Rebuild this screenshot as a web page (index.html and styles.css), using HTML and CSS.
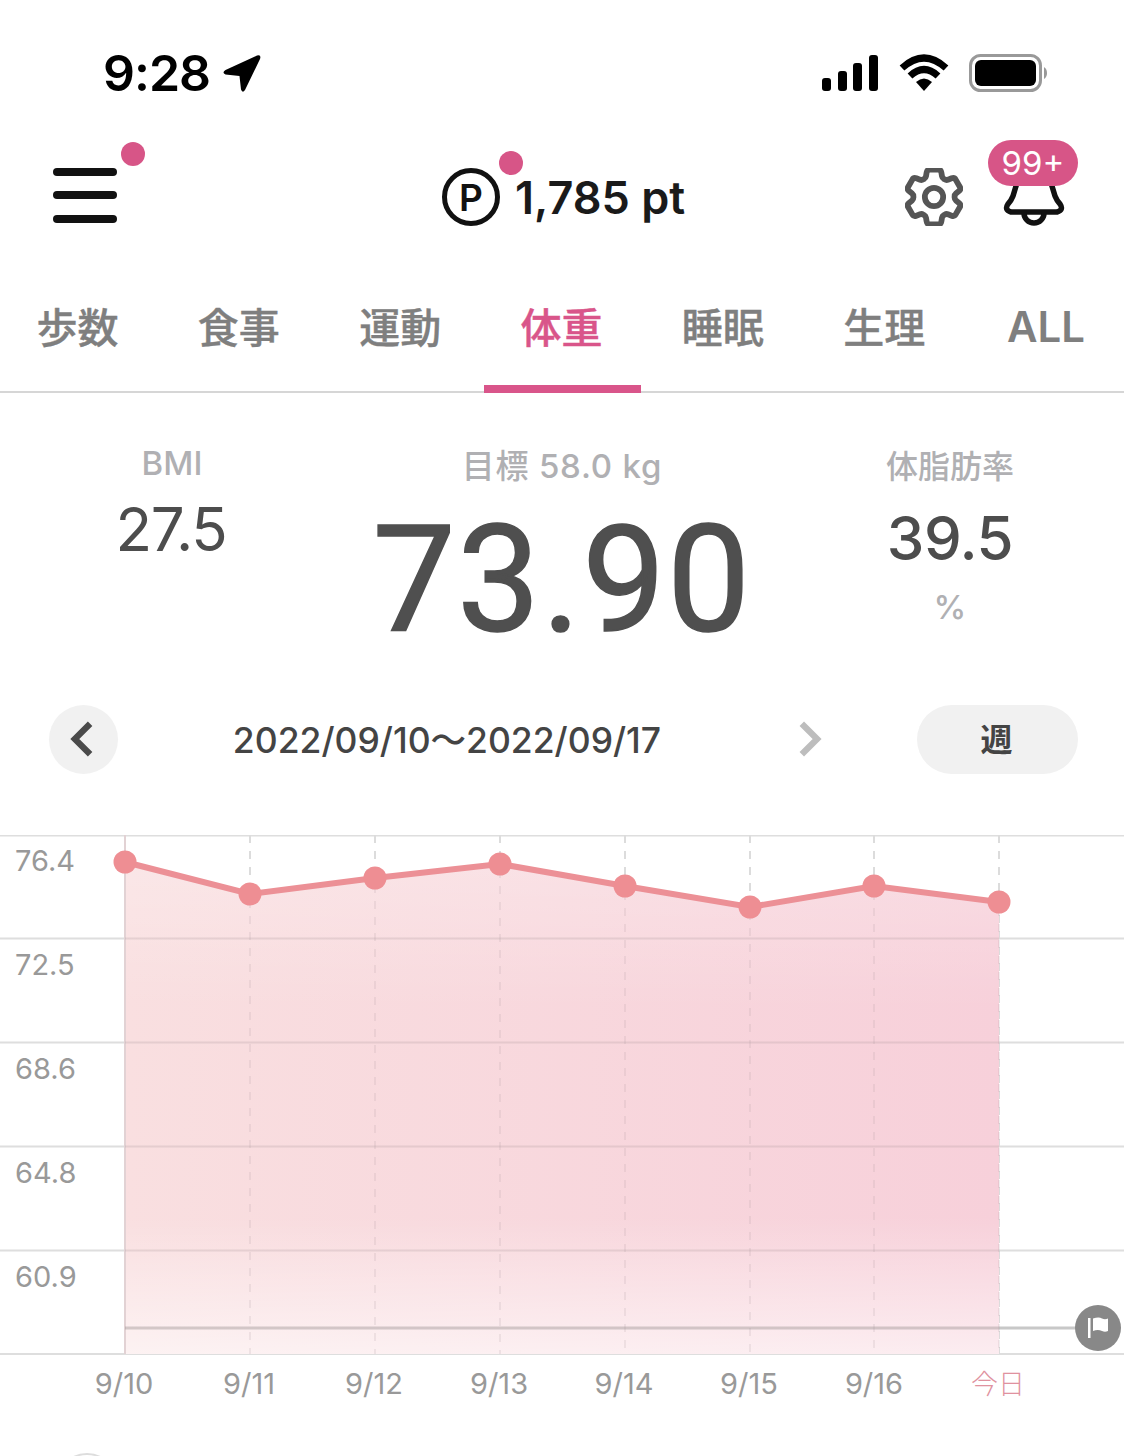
FILE: index.html
```html
<!DOCTYPE html>
<html lang="ja">
<head>
<meta charset="utf-8">
<title>体重</title>
<link rel="stylesheet" href="styles.css">
</head>
<body>
<div class="page">
  <div class="status">
    <span class="time">9:28</span>
    <svg class="loc" width="40" height="40" viewBox="0 0 40 40"><path class="black" d="M35 2.5 L3.5 17 Q-0.5 19.5 3.5 21.5 L17.5 23 L19 36.5 Q20.5 40.5 23 37 L38 6 Q39.5 1 35 2.5Z"/></svg>
    <div class="status-right">
      <svg width="58" height="38" viewBox="0 0 58 38"><rect class="black" x="1" y="24" width="9" height="13" rx="3"/><rect class="black" x="17" y="17" width="9" height="20" rx="3"/><rect class="black" x="32" y="9" width="9" height="28" rx="3"/><rect class="black" x="48" y="1" width="9" height="36" rx="3"/></svg>
      <svg width="50" height="38" viewBox="0 0 50 38"><path class="wifi" d="M3 14 Q25 -6 47 14"/><path class="wifi" d="M11 22 Q25 9 39 22"/><path class="black" d="M17 28 Q25 21 33 28 L25 37Z"/></svg>
      <svg width="78" height="38" viewBox="0 0 78 38"><rect class="bat-o" x="1.5" y="1.5" width="70" height="35" rx="10"/><rect class="black" x="6" y="6" width="61" height="26" rx="6"/><path class="bat-c" d="M75 13 Q78 15 78 19 Q78 23 75 25Z"/></svg>
    </div>
  </div>

  <header class="top">
    <div class="menu"><i></i><i></i><i></i><b class="dot menu-dot"></b></div>
    <div class="points"><span class="p-mark">P</span><span class="p-num">1,785 pt</span><b class="dot p-dot"></b></div>
    <svg class="gear" width="58" height="58" viewBox="2.5 2.5 19 19"><path d="M9.594 3.94c.09-.542.56-.94 1.11-.94h2.593c.55 0 1.02.398 1.11.94l.213 1.281c.063.374.313.686.645.87.074.04.147.083.22.127.324.196.72.257 1.075.124l1.217-.456a1.125 1.125 0 011.37.49l1.296 2.247a1.125 1.125 0 01-.26 1.431l-1.003.827c-.293.24-.438.613-.431.992a6.759 6.759 0 010 .255c-.007.378.138.75.43.99l1.005.828c.424.35.534.954.26 1.43l-1.298 2.247a1.125 1.125 0 01-1.369.491l-1.217-.456c-.355-.133-.75-.072-1.076.124a6.57 6.57 0 01-.22.128c-.331.183-.581.495-.644.869l-.213 1.28c-.09.543-.56.941-1.11.941h-2.594c-.55 0-1.02-.398-1.11-.94l-.213-1.281c-.062-.374-.312-.686-.644-.87a6.52 6.52 0 01-.22-.127c-.325-.196-.72-.257-1.076-.124l-1.217.456a1.125 1.125 0 01-1.369-.49l-1.297-2.247a1.125 1.125 0 01.26-1.431l1.004-.827c.292-.24.437-.613.43-.992a6.932 6.932 0 010-.255c.007-.378-.138-.75-.43-.99l-1.004-.828a1.125 1.125 0 01-.26-1.43l1.297-2.247a1.125 1.125 0 011.37-.491l1.216.456c.356.133.751.072 1.076-.124.072-.044.146-.087.22-.128.332-.183.582-.495.644-.869l.214-1.281z"/><circle cx="12" cy="12" r="3"/></svg>
    <div class="bell">
      <svg width="64" height="70" viewBox="0 0 64 70"><path d="M18 10 L11 33 Q9 38 6 41 Q2 47 9 49 H55 Q62 47 58 41 Q55 38 53 33 L46 10"/><path d="M22 50 a10 10 0 0 0 20 0"/></svg>
      <span class="badge">99+</span>
    </div>
  </header>

  <nav class="tabs">
    <a class="tab">歩数</a><a class="tab">食事</a><a class="tab">運動</a><a class="tab on">体重</a><a class="tab">睡眠</a><a class="tab">生理</a><a class="tab last">ALL</a>
  </nav>

  <section class="stats">
    <div class="stat bmi"><div class="label">BMI</div><div class="small-val">27.5</div></div>
    <div class="stat main"><div class="label">目標 58.0 kg</div><div class="big-val">73.90</div></div>
    <div class="stat fat"><div class="label">体脂肪率</div><div class="mid-val">39.5</div><div class="unit">%</div></div>
  </section>

  <section class="range">
    <button class="round"><svg width="32" height="42" viewBox="0 0 32 42"><path d="M25 4 L8 21 L25 38"/></svg></button>
    <div class="dates">2022/09/10～2022/09/17</div>
    <button class="round ghost"><svg width="32" height="42" viewBox="0 0 32 42"><path d="M8 4 L25 21 L8 38"/></svg></button>
    <button class="week">週</button>
  </section>

  <svg class="chart" width="1124" height="621" viewBox="0 835 1124 621">
    <defs>
      <linearGradient id="tint" x1="125" y1="0" x2="999" y2="0" gradientUnits="userSpaceOnUse">
        <stop offset="0" stop-color="#f9dfe0"/><stop offset="1" stop-color="#f7d0da"/>
      </linearGradient>
      <linearGradient id="wash" x1="0" y1="862" x2="0" y2="1354" gradientUnits="userSpaceOnUse">
        <stop offset="0" stop-color="#fff" stop-opacity=".25"/><stop offset=".3" stop-color="#fff" stop-opacity="0"/><stop offset=".72" stop-color="#fff" stop-opacity="0"/><stop offset="1" stop-color="#fff" stop-opacity=".6"/>
      </linearGradient>
    </defs>
    <g class="grid">
      <path d="M0 835.5H1124M0 938.5H1124M0 1042.5H1124M0 1146.5H1124M0 1250.5H1124M0 1354H1124"/>
    </g>
    <g class="vdash"><path d="M250 835V1354M375 835V1354M500 835V1354M625 835V1354M750 835V1354M874 835V1354M999 835V1354"/></g>
    <path class="target-out" d="M999 1328H1080"/>
    <path class="area-a" d="M125 862 L250 894 L375 878 L500 864 L625 886 L750 907 L874 886 L999 902 V1354 H125Z"/>
    <path class="area-b" d="M125 862 L250 894 L375 878 L500 864 L625 886 L750 907 L874 886 L999 902 V1354 H125Z"/>
    <path class="axis0" d="M125 835V1354"/>
    <path class="in-grid" d="M125 938.5H999M125 1042.5H999M125 1146.5H999M125 1250.5H999"/>
    <path class="in-dash" d="M250 900V1354M375 885V1354M500 870V1354M625 892V1354M750 912V1354M874 892V1354M999 908V1354"/>
    <path class="target" d="M125 1328H999"/>
    <polyline class="line" points="125,862 250,894 375,878 500,864 625,886 750,907 874,886 999,902"/>
    <g class="pts"><circle cx="125" cy="862" r="11.5"/><circle cx="250" cy="894" r="11.5"/><circle cx="375" cy="878" r="11.5"/><circle cx="500" cy="864" r="11.5"/><circle cx="625" cy="886" r="11.5"/><circle cx="750" cy="907" r="11.5"/><circle cx="874" cy="886" r="11.5"/><circle cx="999" cy="902" r="11.5"/></g>
    <circle class="flag-bg" cx="1098" cy="1328" r="23"/>
    <rect class="flag-w" x="1088" y="1318" width="2.5" height="20"/>
    <path class="flag-w" d="M1093 1318.5 Q1099 1316.5 1102 1318.5 Q1105 1320 1108 1318.5 V1331 Q1105 1332.5 1102 1331 Q1098 1329 1093 1331Z"/>
    <g class="ylab"><text x="15" y="871">76.4</text><text x="15" y="975">72.5</text><text x="15" y="1079">68.6</text><text x="15" y="1183">64.8</text><text x="15" y="1287">60.9</text></g>
    <g class="xlab"><text x="124" y="1394">9/10</text><text x="249" y="1394">9/11</text><text x="374" y="1394">9/12</text><text x="499" y="1394">9/13</text><text x="624" y="1394">9/14</text><text x="749" y="1394">9/15</text><text x="874" y="1394">9/16</text><text class="today" x="998" y="1394">今日</text></g>
    <circle class="peek" cx="87" cy="1484" r="30"/>
  </svg>
</div>
</body>
</html>
```
FILE: styles.css
```css
* { box-sizing: border-box; }
html, body { margin: 0; padding: 0; background: #fff; }
body { font-family: Inter, "Noto Sans CJK JP", sans-serif; }
.page { width: 1124px; height: 1456px; overflow: hidden; position: relative; }

.black { fill: #000; }
.status { height: 147px; display: flex; align-items: center; padding: 0 77px 0 103px; }
.time { font-size: 50px; font-weight: 600; color: #000; line-height: 1; margin-top: -2px; letter-spacing: -1px; }
.loc { margin-left: 12px; margin-top: -2px; }
.status-right { margin-left: auto; display: flex; align-items: center; gap: 20px; margin-top: -2px; }
.wifi { fill: none; stroke: #000; stroke-width: 7; }
.bat-o { fill: none; stroke: #999; stroke-width: 3; }
.bat-c { fill: #999; }

.top { height: 100px; display: flex; align-items: center; padding: 0 58px 0 53px; position: relative; }
.menu { width: 64px; display: flex; flex-direction: column; gap: 15.5px; position: relative; margin-top: -4px; }
.menu i { display: block; height: 8px; background: #111; border-radius: 4px; }
.dot { position: absolute; width: 24px; height: 24px; border-radius: 50%; background: #d75587; }
.menu-dot { left: 68px; top: -26px; }
.points { margin-left: 325px; display: flex; align-items: center; position: relative; }
.p-mark { width: 58px; height: 58px; border: 5px solid #111; border-radius: 50%; display: flex; align-items: center; justify-content: center; font-size: 37px; font-weight: 600; color: #111; }
.p-num { margin-left: 15px; font-size: 45px; font-weight: 600; color: #1a1a1a; letter-spacing: 0; }
.p-dot { left: 57px; top: -17px; }
.gear { margin-left: auto; margin-right: 39px; fill: none; stroke: #555; stroke-width: 1.9; stroke-linejoin: round; }
.bell { width: 64px; height: 70px; position: relative; margin-top: 2px; }
.bell svg { fill: none; stroke: #111; stroke-width: 5.5; stroke-linecap: round; stroke-linejoin: round; display: block; }
.badge { position: absolute; left: -14px; top: -23px; width: 90px; height: 46px; border-radius: 23px; background: #d75587; color: #fff; font-size: 33px; display: flex; align-items: center; justify-content: center; }

.tabs { margin-top: 33px; height: 113px; display: flex; gap: 4.33px; border-bottom: 2px solid #d6d6d6; }
.tab { flex: 0 0 157px; height: 113px; padding: 22px 2px 0 0; line-height: 47px; text-align: center; font-size: 41px; font-weight: 500; color: #7f7f7f; font-family: "Noto Sans CJK JP", sans-serif; -webkit-text-stroke: .4px currentColor; }
.tab.last { font-family: Inter, sans-serif; font-size: 42px; font-weight: 600; flex-basis: 156px; -webkit-text-stroke: 0; padding: 23px 0 0 0; }
.tab.on { color: #d9558a; border-bottom: 8px solid #d9558a; }

.stats { height: 312px; display: grid; grid-template-columns: 344px 436px 340px; }
.stat { text-align: center; }
.label { font-size: 33px; color: #b0b0b3; line-height: 40px; font-weight: 500; }
.bmi .label { padding-top: 50px; }
.main .label { padding-top: 53px; letter-spacing: .8px; }
.fat .label { padding-top: 51px; font-family: "Noto Sans CJK JP", sans-serif; font-size: 32px; }
.small-val { font-size: 60px; color: #4d4d4d; line-height: 70px; margin-top: 11px; letter-spacing: -1.2px; margin-left: -2px; }
.big-val { font-family: Roboto, Inter, sans-serif; font-size: 148px; font-weight: 400; color: #4f4f4f; line-height: 150px; margin-top: 20px; letter-spacing: 1.5px; -webkit-text-stroke: 1.5px #4f4f4f; }
.mid-val { font-size: 60px; color: #4d4d4d; line-height: 70px; margin-top: 19px; letter-spacing: -.5px; font-weight: 500; }
.unit { font-size: 33px; color: #b0b0b3; line-height: 40px; margin-top: 14px; font-weight: 500; }

.range { height: 70px; display: flex; align-items: center; padding: 0 46px 0 49px; margin-top: -1px; }
button { border: 0; padding: 0; font: inherit; }
.round { width: 69px; height: 69px; border-radius: 50%; background: #f1f1f1; display: flex; align-items: center; justify-content: center; }
.round svg { fill: none; stroke: #4a4a4a; stroke-width: 7; display: block; transform: translate(-2px, 0) scale(.9); }
.round.ghost { background: none; margin-right: 72px; }
.round.ghost svg { stroke: #bdbdbd; }
.dates { flex: 1; text-align: center; font-size: 35.5px; font-weight: 500; color: #444; white-space: nowrap; margin-top: -3px; }
.week { width: 161px; height: 69px; border-radius: 35px; background: #f1f1f1; color: #444; font-size: 32px; font-weight: 700; font-family: "Noto Sans CJK JP", sans-serif; padding: 0 2px 4px 0; }

.chart { display: block; margin-top: 61px; }
.area-a { fill: url(#tint); }
.area-b { fill: url(#wash); }
.grid path { fill: none; stroke: #dedede; stroke-width: 2; }
.axis0 { fill: none; stroke: #e2d2d4; stroke-width: 2; }
.vdash path { fill: none; stroke: #dcdcdc; stroke-width: 2; stroke-dasharray: 8 8; }
.in-grid { fill: none; stroke: rgba(170, 150, 155, .25); stroke-width: 2; }
.in-dash { fill: none; stroke: rgba(170, 150, 155, .16); stroke-width: 2; stroke-dasharray: 8 8; }
.target { fill: none; stroke: rgba(150, 140, 140, .4); stroke-width: 3; }
.target-out { fill: none; stroke: #c8c8c8; stroke-width: 3; }
.line { fill: none; stroke: #ec9096; stroke-width: 6; }
.pts circle { fill: #ee8e93; }
.flag-bg { fill: #888; }
.flag-w { fill: #fff; }
.ylab text { font-size: 29px; fill: #999; font-family: Inter, sans-serif; }
.xlab text { font-size: 29px; fill: #999; text-anchor: middle; font-family: Inter, sans-serif; }
.xlab .today { fill: #e0929f; font-family: "Noto Sans CJK JP", sans-serif; font-weight: 300; font-size: 27px; }
.peek { fill: #fff; stroke: #ddd; stroke-width: 2; }
```
